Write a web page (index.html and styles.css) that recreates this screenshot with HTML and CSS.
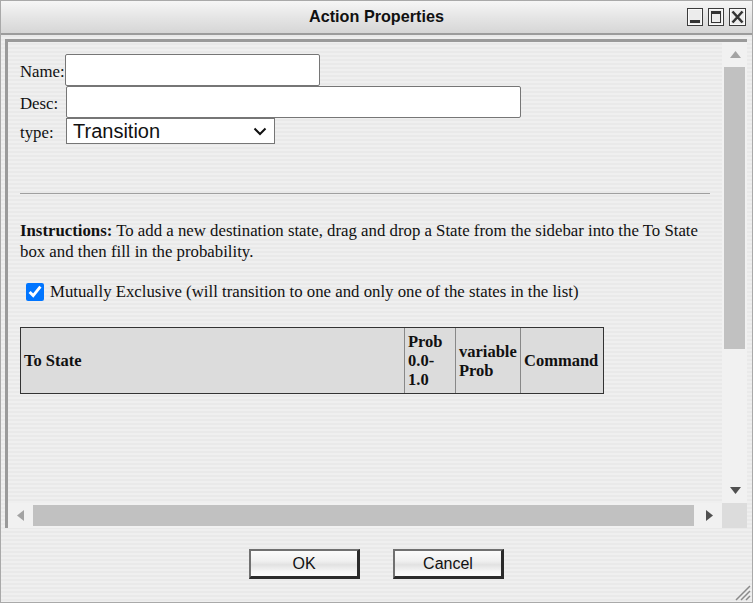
FILE: index.html
```html
<!DOCTYPE html>
<html>
<head>
<meta charset="utf-8">
<title>Action Properties</title>
<link rel="stylesheet" href="styles.css">
</head>
<body>
<div class="window">
  <div class="titlebar">
    <span></span>
    <span class="title">Action Properties</span>
    <div class="wbtns">
      <svg class="wbtn" width="16" height="18" viewBox="0 0 16 18"><rect x="0.5" y="0.5" width="15" height="17" fill="#ececec" stroke="#3c3c3c"/><rect x="1.5" y="1.5" width="13" height="15" fill="none" stroke="#fafafa"/><rect x="3" y="12" width="10" height="3" fill="#333"/></svg>
      <svg class="wbtn" width="16" height="18" viewBox="0 0 16 18"><rect x="0.5" y="0.5" width="15" height="17" fill="#ececec" stroke="#3c3c3c"/><rect x="1.5" y="1.5" width="13" height="15" fill="none" stroke="#fafafa"/><rect x="3.5" y="3.5" width="9" height="11" fill="none" stroke="#333"/><rect x="3" y="3" width="10" height="3" fill="#333"/></svg>
      <svg class="wbtn" width="17" height="18" viewBox="0 0 17 18"><rect x="0.5" y="0.5" width="16" height="17" fill="#ececec" stroke="#3c3c3c"/><rect x="1.5" y="1.5" width="14" height="15" fill="none" stroke="#fafafa"/><path d="M3.5 3.5 L13.5 14.5 M13.5 3.5 L3.5 14.5" stroke="#333" stroke-width="2.6"/></svg>
    </div>
  </div>

  <div class="pane">
    <div class="view">
      <div class="content">
        <div class="form">
          <label class="lbl">Name:</label><input class="in-name" type="text">
          <label class="lbl">Desc:</label><input class="in-desc" type="text">
          <label class="lbl">type:</label>
          <div class="selwrap">
            <select class="in-type"><option>Transition</option></select>
            <svg class="chev" width="14" height="9" viewBox="0 0 14 9"><path d="M1.5 1.5 L7 7 L12.5 1.5" fill="none" stroke="#111" stroke-width="2"/></svg>
          </div>
        </div>
        <hr class="sep">
        <p class="instr"><b>Instructions:</b> To add a new destination state, drag and drop a State from the sidebar into the To State box and then fill in the probability.</p>
        <label class="chk"><input type="checkbox" checked> Mutually Exclusive (will transition to one and only one of the states in the list)</label>
        <table class="states">
          <tr>
            <th class="c1">To State</th>
            <th class="c2">Prob 0.0-1.0</th>
            <th class="c3">variable Prob</th>
            <th class="c4">Command</th>
          </tr>
        </table>
      </div>
    </div>
    <div class="vbar">
      <div class="vbtn"><svg width="11" height="7" viewBox="0 0 11 7"><path d="M5.5 0 L11 7 L0 7 Z" fill="#a3a3a3"/></svg></div>
      <div class="vtrack"><div class="vthumb"></div></div>
      <div class="vbtn"><svg width="11" height="7" viewBox="0 0 11 7"><path d="M0 0 L11 0 L5.5 7 Z" fill="#505050"/></svg></div>
    </div>
    <div class="hbar">
      <div class="hbtn l"><svg width="7" height="11" viewBox="0 0 7 11"><path d="M7 0 L7 11 L0 5.5 Z" fill="#a3a3a3"/></svg></div>
      <div class="htrack"><div class="hthumb"></div></div>
      <div class="hbtn r"><svg width="7" height="11" viewBox="0 0 7 11"><path d="M0 0 L7 5.5 L0 11 Z" fill="#505050"/></svg></div>
    </div>
    <div class="corner"></div>
  </div>

  <div class="footer">
    <button class="btn">OK</button>
    <button class="btn">Cancel</button>
  </div>

  <svg class="grip" width="18" height="18" viewBox="0 0 18 18"><path d="M17 3 L3 17 M17 8 L8 17 M17 13 L13 17" stroke="#8a8a8a" stroke-width="1.5"/></svg>
</div>
</body>
</html>
```

FILE: styles.css
```css
* { box-sizing: border-box; }
html, body { margin: 0; padding: 0; }
body {
  width: 753px;
  height: 603px;
  overflow: hidden;
  font-family: "Liberation Serif", "Times New Roman", serif;
  font-size: 16.8px;
  color: #111;
}
.window {
  position: relative;
  width: 753px;
  height: 603px;
  border: 1px solid #a9a9a9;
  background: repeating-linear-gradient(to bottom, #efefef 0 2px, #e9e9e9 2px 4px);
  display: flex;
  flex-direction: column;
}
.titlebar {
  height: 34px;
  flex: none;
  display: grid;
  grid-template-columns: 1fr auto 1fr;
  align-items: center;
  background: linear-gradient(to bottom, #f6f6f6, #e2e2e2 60%, #d6d6d6);
  border-bottom: 2px solid #9c9c9c;
}
.title {
  font-family: "Liberation Sans", Arial, sans-serif;
  font-weight: bold;
  font-size: 16.2px;
  color: #111;
  padding-bottom: 2px;
}
.wbtns {
  justify-self: end;
  display: flex;
  gap: 5px;
  margin-right: 6px;
  margin-bottom: 1px;
}
.wbtn { display: block; }

.pane {
  flex: none;
  margin: 4px 0 0 4px;
  width: 742px;
  height: 489px;
  border-top: 3px solid #9a9a9a;
  border-left: 3px solid #9a9a9a;
  display: grid;
  grid-template-columns: 1fr 25px;
  grid-template-rows: 1fr 25px;
}
.view {
  overflow: hidden;
}
.content {
  padding: 12px 12px 0 12px;
}
.form {
  display: grid;
  grid-template-columns: 45px auto;
  align-items: center;
  justify-items: start;
}
.lbl { padding-top: 3px; }
.in-name, .in-desc {
  height: 32px;
  border: 1px solid #767676;
  border-radius: 2px;
  background: #fff;
  margin: 0;
  padding: 0 4px;
}
.in-name { width: 255px; }
.in-desc { width: 455px; margin-left: 1px; }
.selwrap {
  position: relative;
  margin-left: 1px;
}
.in-type {
  display: block;
  appearance: none;
  -webkit-appearance: none;
  width: 209px;
  height: 26px;
  margin: 0;
  border: 1px solid #767676;
  border-radius: 0;
  background: #fff;
  font-family: "Liberation Sans", Arial, sans-serif;
  font-size: 20px;
  color: #111;
  padding: 0 0 0 6px;
}
.chev {
  position: absolute;
  right: 8px;
  top: 9px;
}
.sep {
  border: 0;
  border-top: 1px solid #a0a0a0;
  margin: 49px 0 0 0;
  height: 0;
}
.instr {
  margin: 26px 0 0 0;
  line-height: 21px;
}
.chk {
  display: flex;
  align-items: center;
  gap: 6px;
  margin: 20px 0 0 6px;
  line-height: 20px;
}
.chk input {
  width: 18px;
  height: 18px;
  margin: 0;
  accent-color: #0075ff;
}
.states {
  margin-top: 25px;
  width: 584px;
  border-collapse: separate;
  border-spacing: 0;
  border: 1px solid #333;
  table-layout: fixed;
  background: #dcdcdc;
}
.states th {
  text-align: left;
  vertical-align: middle;
  padding: 4px 3px;
  line-height: 19px;
  font-size: 16.5px;
  font-weight: bold;
}
.states .c1 { width: 383px; }
.states .c2 { width: 51px; border-left: 1px solid #888; }
.states .c3 { width: 65px; border-left: 1px solid #888; }
.states .c4 { width: 83px; border-left: 1px solid #888; }

.vbar {
  background: #f1f1f1;
  display: flex;
  flex-direction: column;
}
.vbtn {
  height: 25px;
  flex: none;
  display: flex;
  align-items: center;
  justify-content: center;
  padding-left: 2px;
}
.vtrack { flex: 1; }
.vthumb {
  margin-left: 2px;
  width: 21px;
  height: 282px;
  background: #c1c1c1;
}
.hbar {
  background: #f1f1f1;
  display: flex;
}
.hbtn {
  flex: none;
  display: flex;
  align-items: center;
  justify-content: center;
}
.hbtn.l { width: 25px; }
.hbtn.r { width: 25px; }
.htrack {
  flex: 1;
  padding: 2px 3px 2px 0;
}
.hthumb {
  height: 100%;
  background: #c1c1c1;
}
.corner { background: #dcdcdc; }

.footer {
  flex: none;
  display: flex;
  justify-content: center;
  gap: 33px;
  margin-top: 21px;
}
.btn {
  width: 111px;
  height: 30px;
  margin: 0;
  padding: 0;
  font-family: "Liberation Sans", Arial, sans-serif;
  font-size: 16px;
  color: #111;
  border-style: solid;
  border-width: 2px 3px 3px 2px;
  border-color: #707070 #2a2a2a #2a2a2a #707070;
  background: linear-gradient(to bottom, #fbfbfb, #f0f0f0 40%, #e2e2e2 55%, #f4f4f4 80%, #fbfbfb);
}
.grip {
  position: absolute;
  right: 1px;
  bottom: 1px;
}
```
